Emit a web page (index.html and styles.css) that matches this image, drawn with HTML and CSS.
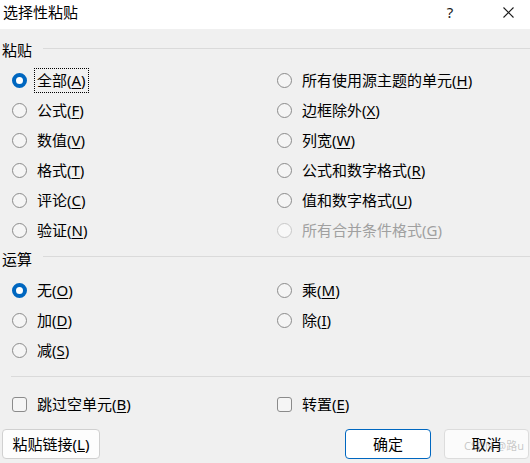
FILE: index.html
```html
<!DOCTYPE html>
<html lang="zh-CN">
<head>
<meta charset="utf-8">
<title>选择性粘贴</title>
<link rel="stylesheet" href="styles.css">
</head>
<body>
<div class="window">
  <div class="titlebar">
    <span class="title">选择性粘贴</span>
    <span class="help">?</span>
    <span class="close"><svg width="11" height="11" viewBox="0 0 11 11"><path d="M0.5 0.5 L10.5 10.5 M10.5 0.5 L0.5 10.5" stroke="#1a1a1a" stroke-width="1.1" fill="none"/></svg></span>
  </div>
  <div class="content">
    <div class="group-head head-paste"><span class="group-label">粘贴</span><span class="rule"></span></div>
    <div class="options opts-paste">
      <div class="opt"><span class="radio checked"></span><span class="text focus">全部(<u>A</u>)</span></div>
      <div class="opt"><span class="radio"></span><span class="text">所有使用源主题的单元(<u>H</u>)</span></div>
      <div class="opt"><span class="radio"></span><span class="text">公式(<u>F</u>)</span></div>
      <div class="opt"><span class="radio"></span><span class="text">边框除外(<u>X</u>)</span></div>
      <div class="opt"><span class="radio"></span><span class="text">数值(<u>V</u>)</span></div>
      <div class="opt"><span class="radio"></span><span class="text">列宽(<u>W</u>)</span></div>
      <div class="opt"><span class="radio"></span><span class="text">格式(<u>T</u>)</span></div>
      <div class="opt"><span class="radio"></span><span class="text">公式和数字格式(<u>R</u>)</span></div>
      <div class="opt"><span class="radio"></span><span class="text">评论(<u>C</u>)</span></div>
      <div class="opt"><span class="radio"></span><span class="text">值和数字格式(<u>U</u>)</span></div>
      <div class="opt"><span class="radio"></span><span class="text">验证(<u>N</u>)</span></div>
      <div class="opt disabled"><span class="radio"></span><span class="text">所有合并条件格式(<u>G</u>)</span></div>
    </div>
    <div class="group-head head-op"><span class="group-label">运算</span><span class="rule"></span></div>
    <div class="options opts-op">
      <div class="opt"><span class="radio checked"></span><span class="text">无(<u>O</u>)</span></div>
      <div class="opt"><span class="radio"></span><span class="text">乘(<u>M</u>)</span></div>
      <div class="opt"><span class="radio"></span><span class="text">加(<u>D</u>)</span></div>
      <div class="opt"><span class="radio"></span><span class="text">除(<u>I</u>)</span></div>
      <div class="opt"><span class="radio"></span><span class="text">减(<u>S</u>)</span></div>
    </div>
    <div class="separator"></div>
    <div class="options opts-check">
      <div class="opt"><span class="checkbox"></span><span class="text">跳过空单元(<u>B</u>)</span></div>
      <div class="opt"><span class="checkbox"></span><span class="text">转置(<u>E</u>)</span></div>
    </div>
    <div class="buttons">
      <button class="btn btn-link">粘贴链接(<u>L</u>)</button>
      <button class="btn btn-ok">确定</button>
      <button class="btn btn-cancel">取消<span class="watermark">CSDN @路u</span></button>
    </div>
  </div>
</div>
</body>
</html>
```
FILE: styles.css
```css
html, body {
  margin: 0;
  padding: 0;
}
body {
  width: 530px;
  height: 463px;
  overflow: hidden;
  background: #f0f0f0;
  font-family: "Noto Sans", "Noto Sans CJK SC", sans-serif;
  font-size: 15px;
  color: #000;
}
.window {
  width: 530px;
  height: 463px;
  background: #f0f0f0;
}
.titlebar {
  height: 29px;
  background: #ffffff;
  display: flex;
  align-items: center;
}
.title {
  padding-left: 3px;
  line-height: 22px;
  margin-top: -5px;
}
.help {
  margin-left: auto;
  width: 20px;
  text-align: center;
  font-size: 15px;
  line-height: 20px;
  margin-top: -5px;
  color: #1a1a1a;
}
.close {
  display: flex;
  margin-left: 43px;
  margin-right: 16px;
  margin-top: -5px;
}
.content {
  display: flex;
  flex-direction: column;
}
.group-head {
  display: flex;
  align-items: flex-start;
  height: 20px;
}
.head-paste {
  margin-top: 11px;
}
.head-op {
  margin-top: 4px;
}
.group-label {
  padding-left: 2px;
  line-height: 20px;
}
.rule {
  flex: 1;
  height: 1px;
  background: #dadada;
  margin-left: 11px;
}
.head-paste .rule {
  margin-top: 8px;
}
.head-op .rule {
  margin-top: 7px;
}
.options {
  display: grid;
  grid-template-columns: 265px 1fr;
  grid-auto-rows: 30px;
  padding-left: 12px;
}
.opts-paste {
  margin-top: 5px;
}
.opts-op {
  margin-top: 6px;
}
.opt {
  display: flex;
  align-items: center;
  gap: 8px;
}
.text {
  padding: 0 2px;
  line-height: 23px;
  white-space: nowrap;
}
.text u {
  text-underline-offset: 2px;
}
.focus {
  outline: 1px dotted #000;
}
.radio {
  box-sizing: border-box;
  width: 15px;
  height: 15px;
  border-radius: 50%;
  border: 1px solid #8b8b8b;
  background: #f5f5f5;
  flex: none;
}
.radio.checked {
  border: 4px solid #0067c0;
  background: #ffffff;
}
.disabled .radio {
  border-color: #c8c8c8;
  background: #f8f8f8;
}
.disabled .text {
  color: #a0a0a0;
}
.separator {
  height: 1px;
  background: #dadada;
  margin-top: 11px;
  margin-left: 11px;
}
.opts-check {
  margin-top: 12px;
}
.checkbox {
  box-sizing: border-box;
  width: 15px;
  height: 15px;
  border-radius: 3px;
  border: 1px solid #8b8b8b;
  background: #f5f5f5;
  flex: none;
}
.buttons {
  display: flex;
  margin-top: 10px;
  padding-left: 2px;
  padding-right: 1px;
}
.btn {
  position: relative;
  box-sizing: border-box;
  height: 30px;
  border: 1px solid #d0d0d0;
  border-radius: 4px;
  background: #fdfdfd;
  font-family: "Noto Sans", "Noto Sans CJK SC", sans-serif;
  font-size: 15px;
  color: #000;
  padding: 0;
  line-height: 26px;
}
.btn-link {
  width: 98px;
}
.btn-ok {
  width: 86px;
  margin-left: auto;
  border-color: #0067c0;
  background: #ffffff;
}
.btn-cancel {
  width: 85px;
  margin-left: 13px;
  border-color: #dcdcdc;
  background: #fbfbfb;
}
.watermark {
  position: absolute;
  left: 19px;
  top: 9px;
  font-size: 11px;
  line-height: 13px;
  color: rgba(120, 120, 120, 0.4);
  white-space: nowrap;
}
```
